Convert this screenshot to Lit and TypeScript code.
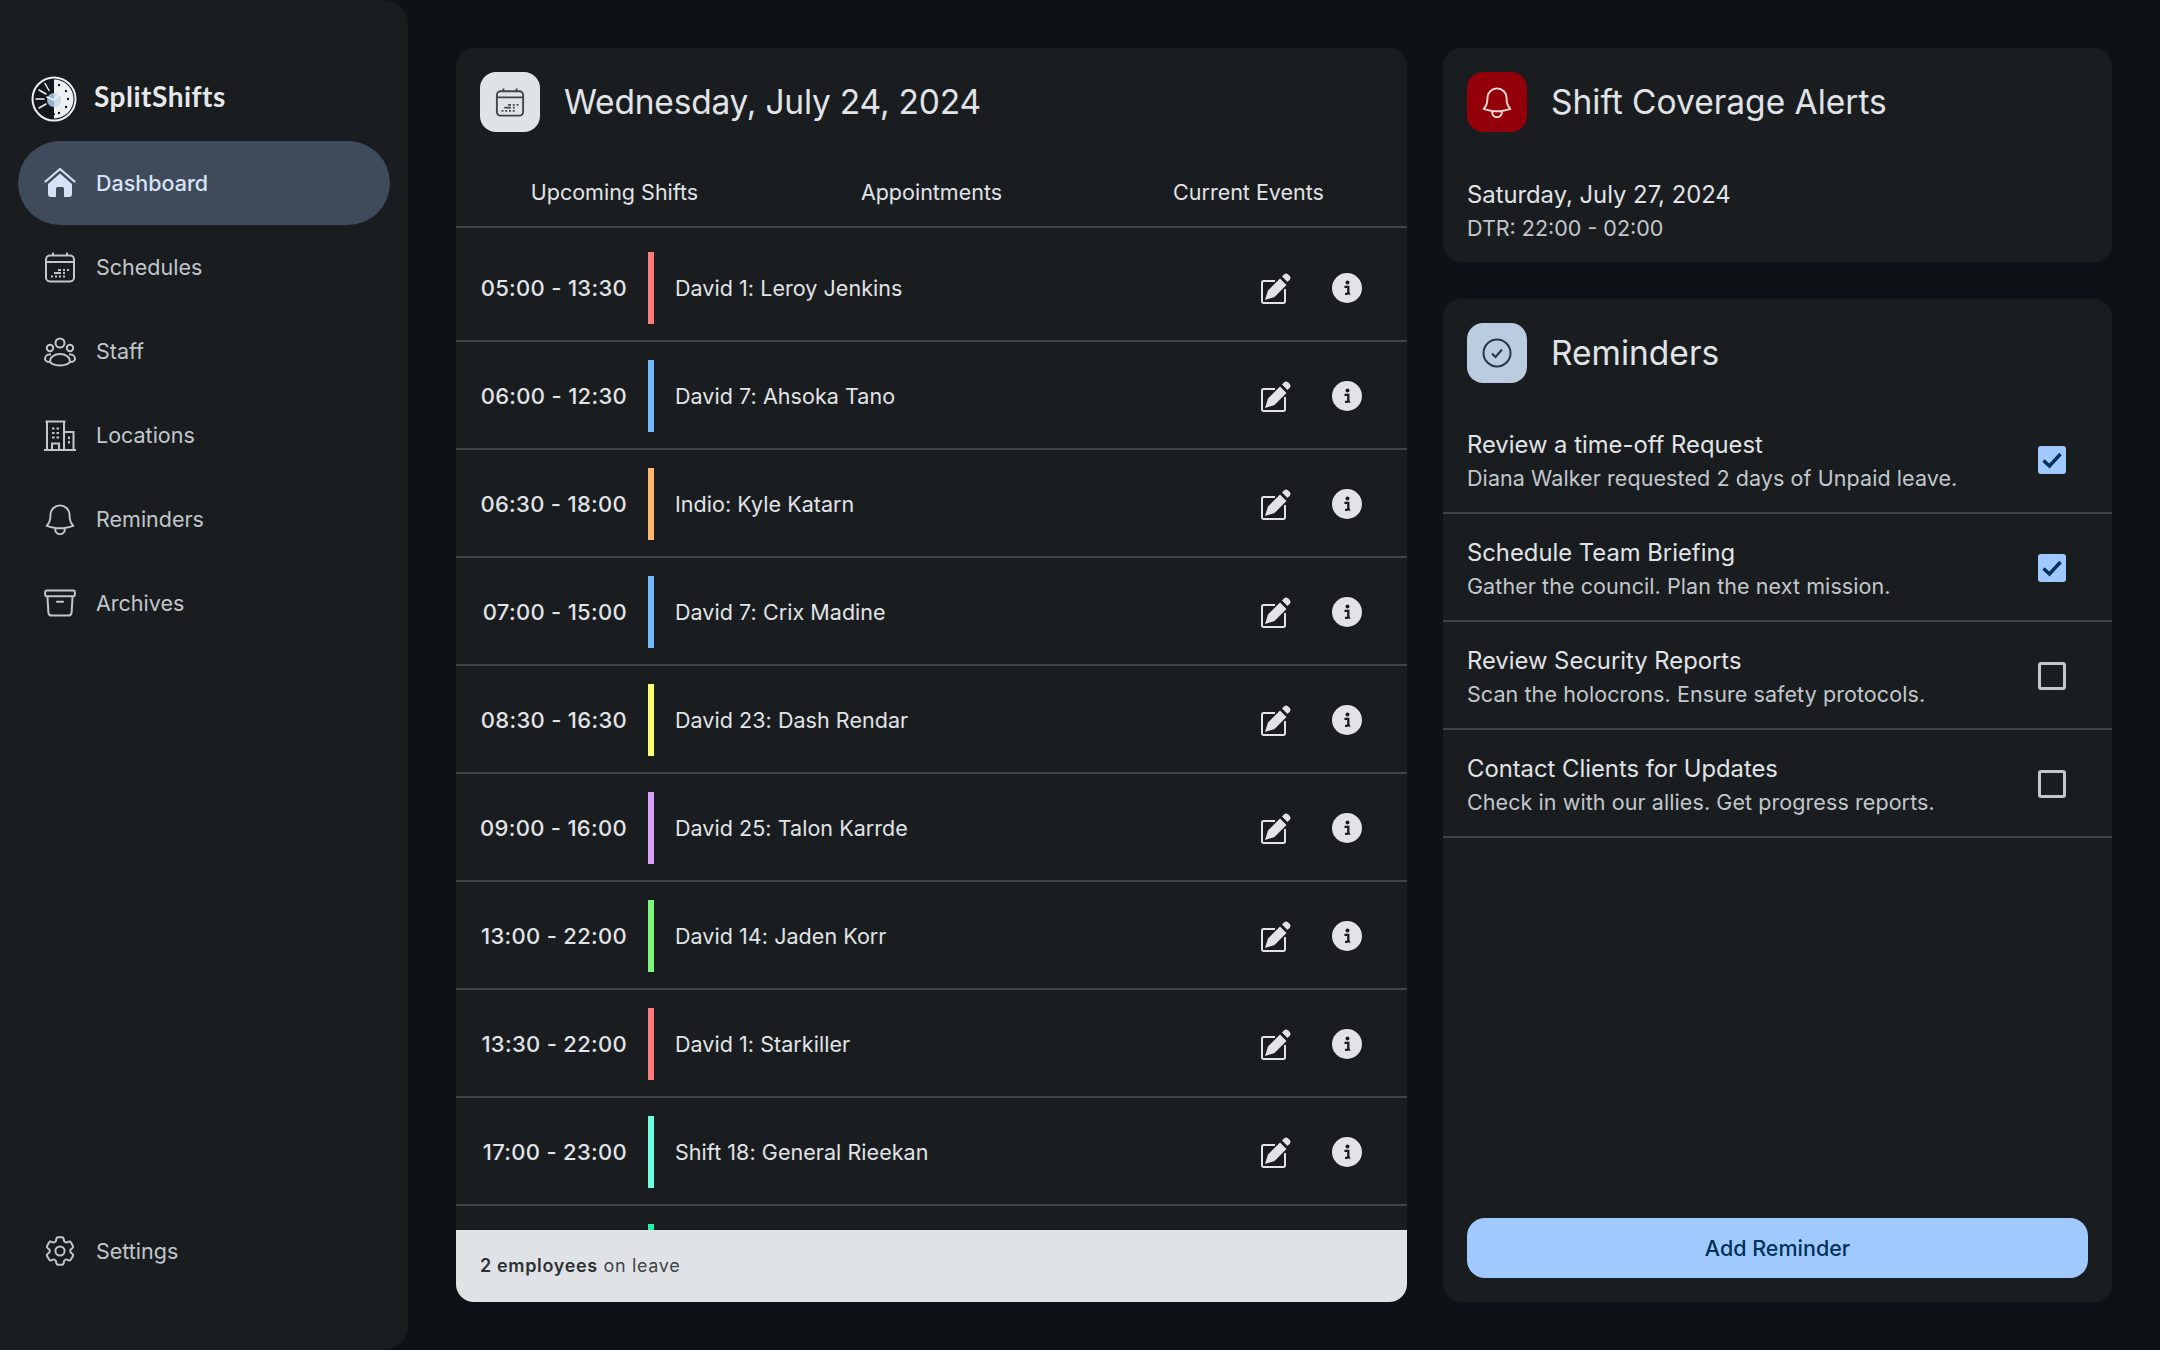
import { LitElement, html, css, svg } from 'lit';
import { customElement, state } from 'lit/decorators.js';

type Shift = { time?: string; name?: string; color: string };
type Reminder = { title: string; detail: string; done: boolean };

// the last row sits under the footer, only the top of its bar shows
const SHIFTS: Shift[] = [
  { time: '05:00 - 13:30', name: 'David 1: Leroy Jenkins', color: '#ff7b7b' },
  { time: '06:00 - 12:30', name: 'David 7: Ahsoka Tano', color: '#73b7ff' },
  { time: '06:30 - 18:00', name: 'Indio: Kyle Katarn', color: '#ffb56b' },
  { time: '07:00 - 15:00', name: 'David 7: Crix Madine', color: '#73b7ff' },
  { time: '08:30 - 16:30', name: 'David 23: Dash Rendar', color: '#ffff6e' },
  { time: '09:00 - 16:00', name: 'David 25: Talon Karrde', color: '#d9a0fa' },
  { time: '13:00 - 22:00', name: 'David 14: Jaden Korr', color: '#7df57a' },
  { time: '13:30 - 22:00', name: 'David 1: Starkiller', color: '#ff7b7b' },
  { time: '17:00 - 23:00', name: 'Shift 18: General Rieekan', color: '#6fffe0' },
  { color: '#1df5a5' },
];

const REMINDERS: Reminder[] = [
  { title: 'Review a time-off Request', detail: 'Diana Walker requested 2 days of Unpaid leave.', done: true },
  { title: 'Schedule Team Briefing', detail: 'Gather the council. Plan the next mission.', done: true },
  { title: 'Review Security Reports', detail: 'Scan the holocrons. Ensure safety protocols.', done: false },
  { title: 'Contact Clients for Updates', detail: 'Check in with our allies. Get progress reports.', done: false },
];

const calendar = svg`
  <rect x="2" y="4.500" width="28" height="26" rx="4" fill="none" stroke="currentColor" stroke-width="2"/>
  <path d="M2 11h28M9 1.500v3M23 1.500v3" fill="none" stroke="currentColor" stroke-width="2"/>
  <path d="M14 19h3M19 19h2M23 19h2M10 22h7M19 22h2M7 25.500h2M11 25.500h2M15 25.500h2M19 25.500h2" fill="none" stroke="currentColor" stroke-width="2"/>`;

const home = svg`
  <path d="M1.500 14.500 16 2l14.500 12.500" fill="none" stroke="currentColor" stroke-width="2.200" stroke-linecap="round" stroke-linejoin="round"/>
  <path fill="currentColor" fill-rule="evenodd" d="M16 6.500 28 17v10a3 3 0 0 1-3 3h-5v-8.500a1.500 1.500 0 0 0-1.500-1.500h-5a1.500 1.500 0 0 0-1.500 1.500V30H7a3 3 0 0 1-3-3V17Z"/>`;

const staff = svg`
  <g fill="none" stroke="currentColor" stroke-width="2">
    <circle cx="16" cy="8" r="4.500"/>
    <circle cx="6" cy="13" r="3.200"/>
    <circle cx="26" cy="13" r="3.200"/>
    <path d="M6 26c0-3.500 4-7 10-7s10 3.500 10 7c0 2.500-4.500 4.500-10 4.500S6 28.500 6 26Z"/>
    <path d="M7 19.500H5c-2.500 0-4 2.500-4 4.500 0 1.500 2 3 5 3M25 19.500h2c2.500 0 4 2.500 4 4.500 0 1.500-2 3-5 3"/>
  </g>`;

const building = svg`
  <g fill="none" stroke="currentColor" stroke-width="2">
    <path d="M0 31h32M3 31V2.500M20 31V2.500M1.500 2.500h20M20 13h10.500M29.500 13v18"/>
    <path d="M8 31v-6.500h7V31"/>
    <path stroke-dasharray="2.500 2" d="M8 9.500h9M8 14h9M8 18.500h9M25 17.500v9"/>
  </g>`;

const bell = svg`
  <path fill="none" stroke="currentColor" stroke-width="1.200" stroke-linecap="round" stroke-linejoin="round" d="M14.857 17.082a23.848 23.848 0 0 0 5.454-1.310A8.967 8.967 0 0 1 18 9.750V9A6 6 0 0 0 6 9v.750a8.967 8.967 0 0 1-2.312 6.022c1.733.640 3.560 1.085 5.455 1.310m5.714 0a24.255 24.255 0 0 1-5.714 0m5.714 0a3 3 0 1 1-5.714 0"/>`;

const archive = svg`
  <path fill="none" stroke="currentColor" stroke-width="1.300" stroke-linecap="round" stroke-linejoin="round" d="m20.250 7.500-.625 10.632a2.250 2.250 0 0 1-2.247 2.118H6.622a2.250 2.250 0 0 1-2.247-2.118L3.750 7.500M10 11.250h4M3.375 7.500h17.250c.621 0 1.125-.504 1.125-1.125v-1.500c0-.621-.504-1.125-1.125-1.125H3.375c-.621 0-1.125.504-1.125 1.125v1.500c0 .621.504 1.125 1.125 1.125Z"/>`;

const gear = svg`
  <g fill="none" stroke="currentColor" stroke-width="1.300" stroke-linecap="round" stroke-linejoin="round">
    <path d="M9.594 3.940c.090-.542.560-.940 1.110-.940h2.593c.550 0 1.020.398 1.110.940l.213 1.281c.063.374.313.686.645.870.074.040.147.083.220.127.325.196.720.257 1.075.124l1.217-.456a1.125 1.125 0 0 1 1.370.490l1.296 2.247a1.125 1.125 0 0 1-.260 1.431l-1.003.827c-.293.241-.438.613-.430.992a7.723 7.723 0 0 1 0 .255c-.008.378.137.750.430.991l1.004.827c.424.350.534.955.260 1.430l-1.298 2.247a1.125 1.125 0 0 1-1.369.491l-1.217-.456c-.355-.133-.750-.072-1.076.124a6.470 6.470 0 0 1-.220.128c-.331.183-.581.495-.644.869l-.213 1.281c-.090.543-.560.940-1.110.940h-2.594c-.550 0-1.019-.398-1.110-.940l-.213-1.281c-.062-.374-.312-.686-.644-.870a6.520 6.520 0 0 1-.220-.127c-.325-.196-.720-.257-1.076-.124l-1.217.456a1.125 1.125 0 0 1-1.369-.490l-1.297-2.247a1.125 1.125 0 0 1 .260-1.431l1.004-.827c.292-.240.437-.613.430-.991a6.932 6.932 0 0 1 0-.255c.007-.380-.138-.751-.430-.992l-1.004-.827a1.125 1.125 0 0 1-.260-1.430l1.297-2.247a1.125 1.125 0 0 1 1.370-.491l1.216.456c.356.133.751.072 1.076-.124.072-.044.146-.086.220-.128.332-.183.582-.495.644-.869l.214-1.280Z"/>
    <circle cx="12" cy="12" r="3"/>
  </g>`;

const BELL_VIEW = '2 1.500 20 20';

const NAV = [
  { label: 'Dashboard', view: '0 0 32 32', icon: home, active: true },
  { label: 'Schedules', view: '0 0 32 32', icon: calendar, active: false },
  { label: 'Staff', view: '0 0 32 32', icon: staff, active: false },
  { label: 'Locations', view: '0 0 32 32', icon: building, active: false },
  { label: 'Reminders', view: BELL_VIEW, icon: bell, active: false },
  { label: 'Archives', view: '1.500 1.500 21 21', icon: archive, active: false },
];

@customElement('app-root')
export class AppRoot extends LitElement {
  @state() private reminders = REMINDERS;

  private _toggle(index: number): void {
    this.reminders = this.reminders.map((r, i) => (i === index ? { ...r, done: !r.done } : r));
  }

  private _logo() {
    return html`
      <svg class="logo" viewBox="0 0 46 46" aria-hidden="true">
        <circle cx="23" cy="23" r="21.500" fill="#14181c" stroke="#eef1f4" stroke-width="2"/>
        <path d="M23 3.500a19.500 19.500 0 0 1 0 39Z" fill="#eef1f4"/>
        <g stroke="#eef1f4" stroke-width="1.500" stroke-linecap="round">
          <path d="M5 23h8M8 14l7 4M8 32l7-4M14 7.500l4 7"/>
        </g>
        <g fill="#14181c">
          <circle cx="28" cy="9" r="1.200"/><circle cx="35" cy="15" r="1.200"/><circle cx="37" cy="23" r="1.200"/>
          <circle cx="35" cy="31" r="1.200"/><circle cx="28" cy="37" r="1.200"/><circle cx="23" cy="38" r="1"/>
        </g>
        <circle cx="23" cy="24" r="7" fill="#8fb4d4"/>
        <path d="M23 17a7 7 0 0 1 0 14Z" fill="#cfdce8"/>
        <path d="M23 24l9-10M23 24l-7-3" stroke="#eef1f4" stroke-width="1.500" stroke-linecap="round"/>
      </svg>
    `;
  }

  private _sidebar() {
    return html`
      <nav class="sidebar">
        <div class="brand">${this._logo()}<span class="brand-name">SplitShifts</span></div>
        <div class="nav-list">
          ${NAV.map(
            (n) => html`
              <a class="nav-item ${n.active ? 'nav-item--active' : ''}">
                <svg class="nav-icon" viewBox=${n.view} aria-hidden="true">${n.icon}</svg>
                <span>${n.label}</span>
              </a>
            `
          )}
        </div>
        <a class="nav-item settings">
          <svg class="nav-icon" viewBox="1.500 1.500 21 21" aria-hidden="true">${gear}</svg>
          <span>Settings</span>
        </a>
      </nav>
    `;
  }

  private _shiftRow(s: Shift) {
    if (!s.time) {
      return html`
        <div class="shift">
          <span class="shift-time"></span>
          <span class="shift-bar" style="background:${s.color}"></span>
        </div>
      `;
    }
    return html`
      <div class="shift">
        <span class="shift-time">${s.time}</span>
        <span class="shift-bar" style="background:${s.color}"></span>
        <span class="shift-name">${s.name}</span>
        <svg class="edit" viewBox="0 0 32 32" aria-hidden="true">
          <path d="M15 9H3.500A1.500 1.500 0 0 0 2 10.500v19A1.500 1.500 0 0 0 3.500 31h20a1.500 1.500 0 0 0 1.500-1.500V17" fill="none" stroke="currentColor" stroke-width="2"/>
          <path d="M5 28l3-9.500L20 6.500 26.500 13 14.500 25Z" fill="currentColor"/>
          <path d="M22 4.500 24 2.500a3 3 0 0 1 4.200 0l1.300 1.300a3 3 0 0 1 0 4.200l-2 2Z" fill="currentColor"/>
        </svg>
        <svg class="info" viewBox="0 0 30 30" aria-hidden="true">
          <circle cx="15" cy="15" r="15" fill="currentColor"/>
          <circle cx="15.500" cy="9.500" r="2" fill="#191d20"/>
          <path d="M12.500 13.800h3.800v6c0 1 .8 1 1.700.6M13 20.800h2.500" fill="none" stroke="#191d20" stroke-width="2.300"/>
        </svg>
      </div>
    `;
  }

  private _scheduleCard() {
    return html`
      <section class="card schedule">
        <header class="card-head">
          <span class="tile tile--light">
            <svg viewBox="0 0 32 32" aria-hidden="true">${calendar}</svg>
          </span>
          <h2 class="date-title">Wednesday, July 24, 2024</h2>
        </header>
        <div class="tabs">
          <span>Upcoming Shifts</span>
          <span>Appointments</span>
          <span>Current Events</span>
        </div>
        <div class="shifts">${SHIFTS.map((s) => this._shiftRow(s))}</div>
        <footer class="leave"><b>2 employees</b> on leave</footer>
      </section>
    `;
  }

  private _alertsCard() {
    return html`
      <section class="card alerts">
        <header class="card-head">
          <span class="tile tile--red">
            <svg viewBox=${BELL_VIEW} aria-hidden="true">${bell}</svg>
          </span>
          <h2>Shift Coverage Alerts</h2>
        </header>
        <div class="alert-body">
          <div class="alert-date">Saturday, July 27, 2024</div>
          <div class="alert-time">DTR: 22:00 - 02:00</div>
        </div>
      </section>
    `;
  }

  private _remindersCard() {
    return html`
      <section class="card reminders">
        <header class="card-head">
          <span class="tile tile--blue">
            <svg viewBox="0 0 30 30" aria-hidden="true">
              <circle cx="15" cy="15" r="13.500" fill="none" stroke="currentColor" stroke-width="2"/>
              <path d="M10 15.500l3.500 3.500 6.500-7.500" fill="none" stroke="currentColor" stroke-width="2"/>
            </svg>
          </span>
          <h2>Reminders</h2>
        </header>
        <div class="reminder-list">
          ${this.reminders.map(
            (r, i) => html`
              <div class="reminder">
                <div class="reminder-text">
                  <div class="reminder-title">${r.title}</div>
                  <div class="reminder-detail">${r.detail}</div>
                </div>
                <button
                  class="check ${r.done ? 'check--on' : ''}"
                  role="checkbox"
                  aria-checked=${r.done}
                  aria-label=${r.title}
                  @click=${() => this._toggle(i)}
                >
                  ${r.done
                    ? html`<svg viewBox="0 0 28 28" aria-hidden="true"><path d="M5.500 14.500l6 5.500 11-12" fill="none" stroke="currentColor" stroke-width="3.400"/></svg>`
                    : ''}
                </button>
              </div>
            `
          )}
        </div>
        <button class="add">Add Reminder</button>
      </section>
    `;
  }

  override render() {
    return html`
      ${this._sidebar()}
      <main class="content">
        ${this._scheduleCard()}
        <div class="side-column">${this._alertsCard()} ${this._remindersCard()}</div>
      </main>
    `;
  }

  static styles = css`
    :host {
      display: grid;
      grid-template-columns: 408px 1fr;
      height: 1350px;
      background: #0e1216;
      color: #e1e3e6;
      font-family: Inter, 'Liberation Sans', sans-serif;
      overflow: hidden;
    }

    svg {
      display: block;
    }

    .sidebar {
      display: flex;
      flex-direction: column;
      padding: 76px 18px 0;
      background: #191d20;
      border-radius: 0 24px 24px 0;
    }

    .brand {
      display: flex;
      align-items: center;
      gap: 17px;
      height: 46px;
      padding-left: 13px;
      margin-bottom: 19px;
    }

    .logo {
      width: 46px;
      height: 46px;
      flex: none;
    }

    .brand-name {
      padding-bottom: 7px;
      font-family: Lato, sans-serif;
      font-size: 28px;
      font-weight: 700;
      letter-spacing: 0.5px;
      color: #e6e8ea;
    }

    .nav-list {
      display: flex;
      flex-direction: column;
    }

    .nav-item {
      display: flex;
      align-items: center;
      gap: 20px;
      height: 84px;
      padding-left: 26px;
      border-radius: 42px;
      font-size: 21.500px;
      color: #c2c7cb;
    }

    .nav-item--active {
      background: #3f4a5a;
      color: #d6e3f7;
      font-weight: 500;
    }

    .nav-icon {
      width: 32px;
      height: 32px;
      flex: none;
    }

    .settings {
      margin-top: auto;
      margin-bottom: 57px;
    }

    .content {
      display: grid;
      grid-template-columns: 951px 669px;
      gap: 36px;
      padding: 48px 0 48px 48px;
      min-height: 0;
    }

    .card {
      background: #191d20;
      border-radius: 18px;
    }

    .card-head {
      display: flex;
      align-items: center;
      gap: 24px;
      padding: 24px 24px 0;
    }

    .card-head h2 {
      margin: 0;
      font-size: 33.500px;
      font-weight: 400;
      color: #e1e3e6;
    }

    .card-head .date-title {
      letter-spacing: -0.2px;
    }

    .tile {
      display: flex;
      align-items: center;
      justify-content: center;
      width: 60px;
      height: 60px;
      flex: none;
      border-radius: 16px;
    }

    .tile svg {
      width: 30px;
      height: 30px;
    }

    .tile--light {
      background: #e0e3e6;
      color: #3f4447;
    }

    .tile--red {
      background: #93000a;
      color: #ffdad6;
    }

    .tile--red svg {
      width: 32px;
      height: 32px;
    }

    .tile--blue {
      background: #bccce0;
      color: #263648;
    }

    .schedule {
      display: flex;
      flex-direction: column;
      overflow: hidden;
      min-height: 0;
    }

    .tabs {
      display: grid;
      grid-template-columns: repeat(3, 1fr);
      align-items: center;
      box-sizing: border-box;
      height: 96px;
      padding-top: 26px;
      border-bottom: 2px solid #3e4346;
      text-align: center;
      font-size: 21.500px;
    }

    .shifts {
      flex: 1;
      min-height: 0;
      overflow: hidden;
      padding-top: 6px;
    }

    .shift {
      display: flex;
      align-items: center;
      box-sizing: border-box;
      height: 108px;
      padding: 2px 24px 0;
      border-bottom: 2px solid #3e4346;
      font-size: 21.500px;
      letter-spacing: 0.05px;
    }

    .shift-time {
      width: 147px;
      flex: none;
      text-align: right;
      font-size: 22px;
      font-weight: 500;
      letter-spacing: 0.3px;
    }

    .shift-bar {
      width: 6px;
      height: 72px;
      flex: none;
      margin: 0 21px;
    }

    .shift-name {
      flex: 1;
    }

    .edit {
      width: 32px;
      height: 32px;
      color: #e1e3e6;
    }

    .info {
      width: 30px;
      height: 30px;
      margin: 0 21px 0 40px;
      color: #e1e3e6;
    }

    .leave {
      flex: none;
      height: 72px;
      padding: 0 24px;
      background: #e0e3e6;
      color: #3f4447;
      font-size: 18px;
      line-height: 71px;
      letter-spacing: 0.65px;
    }

    .leave b {
      font-weight: 600;
      color: #2d3134;
    }

    .side-column {
      display: flex;
      flex-direction: column;
      gap: 37px;
      min-height: 0;
    }

    .alerts {
      height: 214px;
      flex: none;
    }

    .alert-body {
      padding: 48px 24px 0;
    }

    .alert-date {
      font-size: 23.800px;
    }

    .alert-time {
      margin-top: 6px;
      font-size: 21.500px;
      color: #c2c7cb;
    }

    .reminders {
      flex: 1;
      display: flex;
      flex-direction: column;
      min-height: 0;
    }

    .reminder-list {
      flex: 1;
      padding-top: 23px;
    }

    .reminder {
      display: flex;
      align-items: center;
      box-sizing: border-box;
      height: 108px;
      padding: 2px 46px 0 24px;
      border-bottom: 2px solid #3e4346;
    }

    .reminder-text {
      flex: 1;
    }

    .reminder-title {
      font-size: 23.800px;
    }

    .reminder-detail {
      margin-top: 6px;
      font-size: 21.500px;
      letter-spacing: 0.08px;
      color: #c2c7cb;
    }

    .check {
      display: block;
      box-sizing: border-box;
      width: 28px;
      height: 28px;
      padding: 0;
      background: none;
      border: 3px solid #c2c7cb;
      border-radius: 3px;
    }

    .check--on {
      background: #a0caff;
      border: none;
      color: #003258;
    }

    .add {
      flex: none;
      height: 60px;
      margin: 0 24px 24px;
      background: #a0caff;
      border: none;
      border-radius: 18px;
      font-family: inherit;
      font-size: 21.500px;
      font-weight: 500;
      color: #003258;
    }
  `;
}

declare global {
  interface HTMLElementTagNameMap {
    'app-root': AppRoot;
  }
}
